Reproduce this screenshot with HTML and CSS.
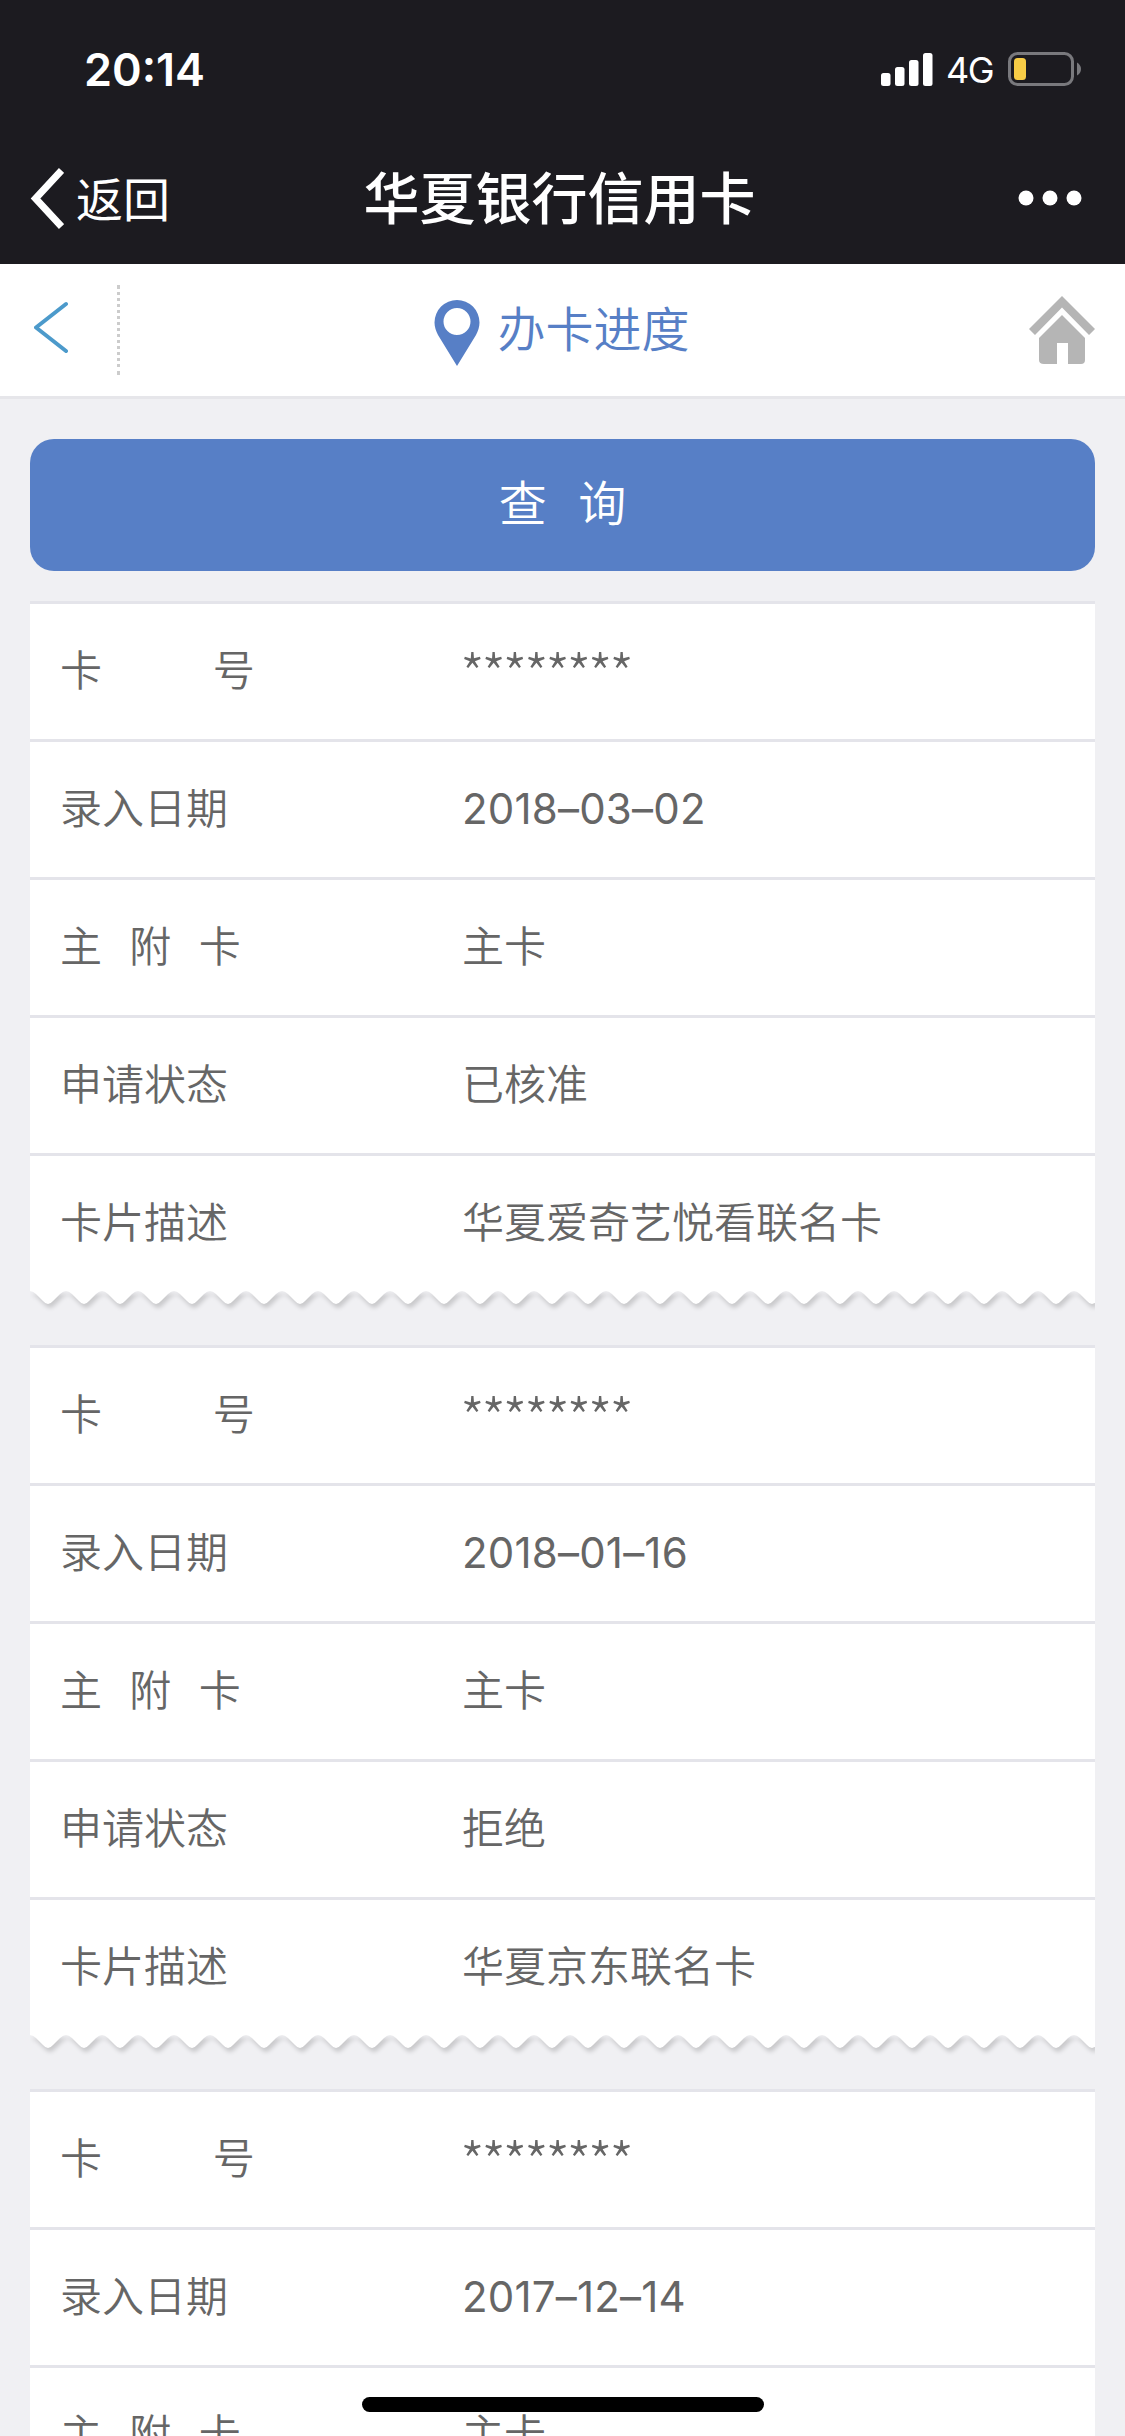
FILE: index.html
```
<!DOCTYPE html>
<html lang="zh-CN">
<head>
  <meta charset="UTF-8">
  <meta name="viewport" content="width=device-width, initial-scale=1">
  <title>华夏银行信用卡</title>
  <link rel="stylesheet" href="styles.css">
</head>
<body>

<div class="top">
  <div class="status">
    <span class="time">20:14</span>
    <div class="status-icons">
      <svg class="signal" width="52" height="33" viewBox="0 0 52 33" fill="#fff">
        <rect x="0" y="20" width="9.5" height="13" rx="2.5"/>
        <rect x="14" y="14" width="9.5" height="19" rx="2.5"/>
        <rect x="28" y="7" width="9.5" height="26" rx="2.5"/>
        <rect x="42" y="0" width="9.5" height="33" rx="2.5"/>
      </svg>
      <span class="network">4G</span>
      <svg class="battery" width="74" height="34" viewBox="0 0 74 34">
        <rect x="1.5" y="1.5" width="63" height="31" rx="8" fill="none" stroke="#79797d" stroke-width="3"/>
        <rect x="6" y="6" width="12" height="22" rx="3.5" fill="#f8cd46"/>
        <path d="M69 10.500Q73 13 73 17T69 23.500Z" fill="#79797d"/>
      </svg>
    </div>
  </div>
  <div class="navbar">
    <a class="back">
      <svg width="34" height="64" viewBox="0 0 34 64">
        <path d="M31.500 4.500L5.500 32.500L31.500 60.500" fill="none" stroke="#fff" stroke-width="7"/>
      </svg>
      <span>返回</span>
    </a>
    <h1>华夏银行信用卡</h1>
    <svg class="more" width="64" height="16" viewBox="0 0 64 16" fill="#fff">
      <circle cx="8" cy="8" r="7.500"/>
      <circle cx="32" cy="8" r="7.500"/>
      <circle cx="56" cy="8" r="7.500"/>
    </svg>
  </div>
</div>

<div class="header">
  <a class="prev">
    <svg width="36" height="54" viewBox="0 0 36 54">
      <path d="M32 3L2 26.500L32 50" fill="none" stroke="#4c9acb" stroke-width="4" stroke-linecap="round" stroke-linejoin="round"/>
    </svg>
  </a>
  <h2>
    <svg width="46" height="66" viewBox="0 0 46 66">
      <path fill="#577fc6" fill-rule="evenodd" d="M23 0A22.500 22.500 0 0 0 .5 22.500C.5 27 2 31 4 35L23 66L42 35C44 31 45.500 27 45.500 22.500A22.500 22.500 0 0 0 23 0ZM23 8A13.500 13.500 0 1 1 23 35A13.500 13.500 0 1 1 23 8Z"/>
    </svg>
    <span>办卡进度</span>
  </h2>
  <svg class="home" width="66" height="68" viewBox="0 0 66 68" fill="#b5b5b5">
    <path d="M33 0L66 33L60 39L33 11.500L6 39L0 33Z"/>
    <path d="M33 19L56 42V64Q56 68 52 68H39V47H28V68H15Q10 68 10 64V42Z"/>
  </svg>
</div>

<div class="content">
  <button class="query">查 询</button>

  <div class="card">
    <div class="row"><span class="label two">卡 号</span><span class="value stars">********</span></div>
    <div class="row"><span class="label">录入日期</span><span class="value num">2018–03–02</span></div>
    <div class="row"><span class="label three">主 附 卡</span><span class="value">主卡</span></div>
    <div class="row"><span class="label">申请状态</span><span class="value">已核准</span></div>
    <div class="row"><span class="label">卡片描述</span><span class="value">华夏爱奇艺悦看联名卡</span></div>
    <svg class="wave" width="1065" height="24">
      <defs>
        <pattern id="teeth" width="36" height="24" patternUnits="userSpaceOnUse">
          <path d="M0 0V1Q3 1 6 4L13 11Q18 17 23 11L30 4Q33 1 36 1V0Z" fill="#fff"/>
        </pattern>
      </defs>
      <rect class="teeth" width="1065" height="24" fill="url(#teeth)"/>
    </svg>
  </div>

  <div class="card">
    <div class="row"><span class="label two">卡 号</span><span class="value stars">********</span></div>
    <div class="row"><span class="label">录入日期</span><span class="value num">2018–01–16</span></div>
    <div class="row"><span class="label three">主 附 卡</span><span class="value">主卡</span></div>
    <div class="row"><span class="label">申请状态</span><span class="value">拒绝</span></div>
    <div class="row"><span class="label">卡片描述</span><span class="value">华夏京东联名卡</span></div>
    <svg class="wave" width="1065" height="24">
      <rect class="teeth" width="1065" height="24" fill="url(#teeth)"/>
    </svg>
  </div>

  <div class="card">
    <div class="row"><span class="label two">卡 号</span><span class="value stars">********</span></div>
    <div class="row"><span class="label">录入日期</span><span class="value num">2017–12–14</span></div>
    <div class="row"><span class="label three">主 附 卡</span><span class="value">主卡</span></div>
  </div>
</div>

<div class="home-bar"></div>

</body>
</html>
```
FILE: styles.css
```
* {
  box-sizing: border-box;
}

html {
  overflow: hidden;
}

body {
  margin: 0;
  height: 2436px;
  overflow: hidden;
  background: #f0f0f3;
  color: #666;
  font-family: Inter, 'Noto Sans CJK SC', sans-serif;
}

svg {
  display: block;
  flex-shrink: 0;
}

/* phone status bar and title bar */
.top {
  height: 264px;
  background: #1c1b20;
  color: #fff;
}

.status {
  height: 132px;
  padding: 6px 44px 0 84px;
  display: flex;
  justify-content: space-between;
  align-items: center;
}

.time {
  font-size: 45px;
  font-weight: 600;
}

.status-icons {
  display: flex;
  align-items: center;
}

.signal {
  margin-right: 13px;
}

.network {
  width: 47px;
  margin-right: 15px;
  padding-top: 2px;
  font-size: 36px;
  letter-spacing: -1.5px;
  white-space: nowrap;
}

.battery {
  margin-right: -1px;
}

.navbar {
  height: 132px;
  padding: 0 43px 0 30px;
  display: flex;
  justify-content: space-between;
  align-items: center;
}

.back {
  display: flex;
  align-items: center;
  width: 200px;
  gap: 12px;
  font-size: 47px;
}

.back span {
  padding-bottom: 4px;
}

.navbar h1 {
  margin: 0;
  padding: 0 0 8px 7px;
  font-size: 56px;
  font-weight: 500;
}

.more {
  margin-left: 136px;
}

/* page header */
.header {
  height: 135px;
  padding: 0 30px 0 34px;
  display: flex;
  justify-content: space-between;
  align-items: center;
  background: #fff;
  border-bottom: 3px solid #e6e6ea;
}

.prev {
  width: 86px;
  height: 90px;
  padding-bottom: 4px;
  display: flex;
  align-items: center;
  border-right: 3px dotted #ccc;
}

.header h2 {
  margin: 0;
  display: flex;
  align-items: center;
  gap: 17px;
  color: #577fc6;
  font-size: 48px;
  font-weight: 350;
}

.header h2 svg {
  margin-top: 6px;
}

.header h2 span {
  padding-bottom: 8px;
}

.home {
  margin-left: 25px;
}

.content {
  padding: 40px 30px 0;
}

.query {
  display: block;
  width: 100%;
  height: 132px;
  margin-bottom: 30px;
  padding: 0 0 10px;
  border: none;
  border-radius: 24px;
  background: #577fc6;
  color: #fff;
  font-family: inherit;
  font-size: 48px;
  font-weight: 350;
  word-spacing: 18px;
}

/* result cards */
.card {
  height: 713px;
  margin-bottom: 31px;
}

.row {
  height: 138px;
  padding: 0 30px 9px;
  display: flex;
  align-items: center;
  background: #fff;
  border-top: 3px solid #e4e4ea;
  font-size: 42px;
  font-weight: 350;
}

.label {
  width: 402px;
}

.two {
  word-spacing: 99px;
}

.three {
  word-spacing: 15.5px;
}

.num {
  padding-top: 6px;
  font-weight: 400;
  letter-spacing: 0.2px;
}

.stars {
  margin-left: -2px;
  padding-top: 10px;
  font-family: 'Noto Sans CJK SC', sans-serif;
  font-size: 56px;
  font-weight: 300;
  line-height: 54px;
  letter-spacing: -3.5px;
}

.wave {
  margin-top: -1px;
}

.teeth {
  filter: drop-shadow(2px 4px 2px rgba(0, 0, 0, 0.16));
}

.home-bar {
  position: fixed;
  left: 362px;
  bottom: 24px;
  width: 402px;
  height: 15px;
  border-radius: 8px;
  background: #000;
}
```
